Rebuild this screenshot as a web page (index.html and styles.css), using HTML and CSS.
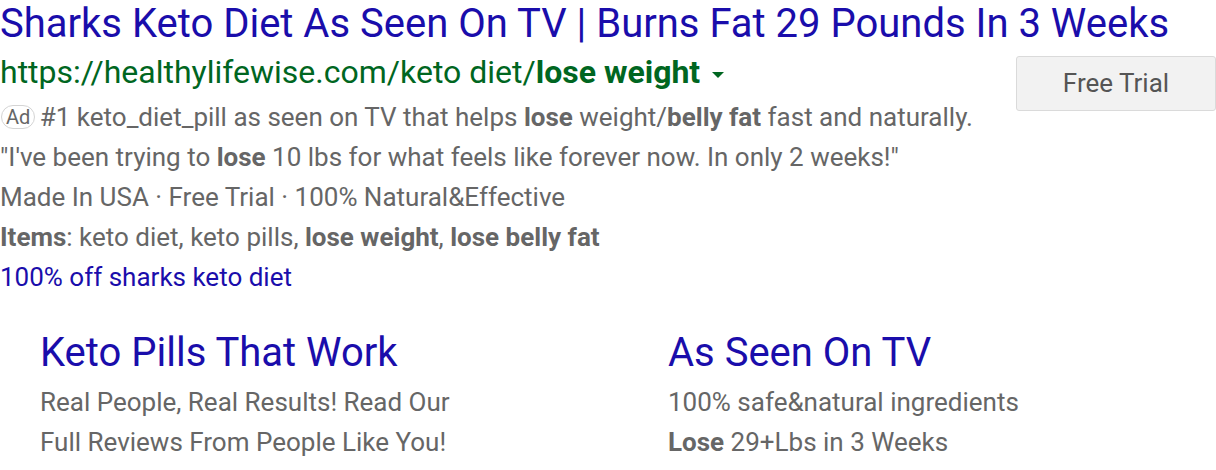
FILE: index.html
```html
<!DOCTYPE html>
<html>
<head>
<meta charset="utf-8">
<link rel="stylesheet" href="styles.css">
</head>
<body>
<div class="ad">
  <div class="title">Sharks Keto Diet As Seen On TV | Burns Fat 29 Pounds In 3 Weeks</div>
  <div class="body">
    <div class="main">
      <div class="url">https://healthylifewise.com/keto diet/<b>lose weight</b><span class="caret"></span></div>
      <div class="lines">
        <div class="line"><span class="badge">Ad</span> #1 keto_diet_pill as seen on TV that helps <b>lose</b> weight/<b>belly fat</b> fast and naturally.</div>
        <div class="line">"I've been trying to <b>lose</b> 10 lbs for what feels like forever now. In only 2 weeks!"</div>
        <div class="line">Made In USA · Free Trial · 100% Natural&amp;Effective</div>
        <div class="line"><b>Items</b>: keto diet, keto pills, <b>lose weight</b>, <b>lose belly fat</b></div>
        <div class="line link">100% off sharks keto diet</div>
      </div>
    </div>
    <div class="btn">Free Trial</div>
  </div>
  <div class="sitelinks">
    <div class="site">
      <div class="site-title">Keto Pills That Work</div>
      <div class="line">Real People, Real Results! Read Our</div>
      <div class="line">Full Reviews From People Like You!</div>
    </div>
    <div class="site">
      <div class="site-title">As Seen On TV</div>
      <div class="line">100% safe&amp;natural ingredients</div>
      <div class="line"><b>Lose</b> 29+Lbs in 3 Weeks</div>
    </div>
  </div>
</div>
</body>
</html>
```

FILE: styles.css
```css
html, body {
  margin: 0;
  padding: 0;
  background: #fff;
}
body {
  font-family: Roboto, "Liberation Sans", Arial, sans-serif;
  color: #666;
}
.ad {
  width: 1216px;
}
.title {
  font-size: 40px;
  line-height: 48px;
  color: #1a0dab;
  white-space: nowrap;
}
.body {
  display: flex;
  margin-top: 4px;
}
.main {
  flex: 1;
}
.url {
  font-size: 32px;
  line-height: 40px;
  color: #006621;
  white-space: nowrap;
}
.url b {
  font-weight: 700;
}
.caret {
  display: inline-block;
  width: 0;
  height: 0;
  border-left: 6px solid transparent;
  border-right: 6px solid transparent;
  border-top: 6px solid #006621;
  margin-left: 12px;
  vertical-align: middle;
}
.lines {
  margin-top: 5px;
}
.line {
  font-size: 26px;
  line-height: 40px;
  color: #666;
  white-space: nowrap;
}
.line b {
  font-weight: 700;
}
.link {
  color: #1a0dab;
}
.badge {
  display: inline-block;
  box-sizing: border-box;
  height: 24px;
  line-height: 22px;
  padding: 0 4px;
  border: 1px solid #d4d4d4;
  border-radius: 12px;
  font-size: 20px;
  color: #666;
  margin-left: 1px;
  margin-right: -2px;
  vertical-align: 2px;
}
.btn {
  box-sizing: border-box;
  width: 200px;
  height: 55px;
  margin-top: 4px;
  background: #f2f2f2;
  border: 1px solid #dadada;
  border-radius: 3px;
  font-size: 26px;
  line-height: 53px;
  text-align: center;
  color: #555;
}
.sitelinks {
  display: grid;
  grid-template-columns: 628px 1fr;
  padding-left: 40px;
  margin-top: 34px;
}
.site-title {
  font-size: 40px;
  line-height: 44px;
  color: #1a0dab;
  margin-bottom: 7px;
}
```
